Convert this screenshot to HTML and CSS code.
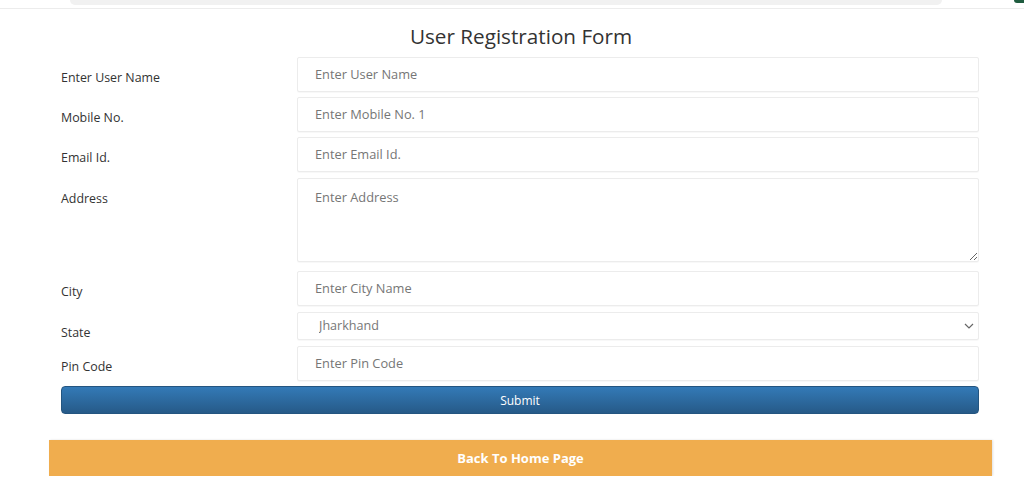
FILE: index.html
```html
<!DOCTYPE html>
<html lang="en">
<head>
<meta charset="utf-8">
<title>User Registration Form</title>
<link rel="stylesheet" href="styles.css">
</head>
<body>
<header class="topbar">
  <div class="search-strip"></div>
  <div class="corner-dot"></div>
</header>
<main class="page">
  <h2 class="title">User Registration Form</h2>
  <form class="reg-form">
    <div class="row">
      <label class="lbl">Enter User Name</label>
      <input class="field" type="text" placeholder="Enter User Name">
    </div>
    <div class="row gap5">
      <label class="lbl">Mobile No.</label>
      <input class="field" type="text" placeholder="Enter Mobile No. 1">
    </div>
    <div class="row gap5">
      <label class="lbl">Email Id.</label>
      <input class="field" type="text" placeholder="Enter Email Id.">
    </div>
    <div class="row gap6">
      <label class="lbl">Address</label>
      <textarea class="field area" placeholder="Enter Address"></textarea>
    </div>
    <div class="row gap9">
      <label class="lbl">City</label>
      <input class="field" type="text" placeholder="Enter City Name">
    </div>
    <div class="row row-short gap6">
      <label class="lbl">State</label>
      <div class="select-wrap">
        <select class="field select">
          <option>Jharkhand</option>
        </select>
        <svg class="chev" width="10" height="6" viewBox="0 0 10 6"><path d="M1 1l4 4 4-4" fill="none" stroke="#666" stroke-width="1.2"/></svg>
      </div>
    </div>
    <div class="row gap6">
      <label class="lbl">Pin Code</label>
      <input class="field" type="text" placeholder="Enter Pin Code">
    </div>
    <button class="submit" type="button">Submit</button>
  </form>
  <button class="back" type="button">Back To Home Page</button>
</main>
</body>
</html>
```

FILE: styles.css
```css
* { box-sizing: border-box; }

body {
  margin: 0;
  font-family: "Open Sans", "Liberation Sans", sans-serif;
  color: #333;
  background: #fff;
}

.topbar {
  height: 9px;
  border-bottom: 1px solid #ececec;
  display: flex;
  justify-content: space-between;
  align-items: flex-start;
}

.search-strip {
  margin-left: 70px;
  width: 872px;
  height: 5px;
  background: #f1f1f1;
  border-radius: 0 0 5px 5px;
}

.corner-dot {
  width: 10px;
  height: 3px;
  background: #1f5c3f;
  border-radius: 0 0 0 6px;
}

.page {
  width: 943px;
  margin-left: 49px;
}

.title {
  margin: 12px 0 5px;
  font-size: 20.7px;
  font-weight: 400;
  line-height: 31px;
  text-align: center;
  color: #333;
  padding-left: 1px;
}

.reg-form {
  padding: 0 13px 0 12px;
}

.row {
  display: flex;
  align-items: flex-start;
}

.row-short { height: 28px; }

.gap5 { margin-top: 5px; }
.gap6 { margin-top: 6px; }
.gap9 { margin-top: 9px; }

.lbl {
  width: 236px;
  flex: none;
  font-size: 12.4px;
  line-height: 18px;
  padding-top: 12px;
  color: #333;
}

.field {
  flex: 1;
  width: 100%;
  height: 35px;
  border: 1px solid #ececec;
  border-radius: 2px;
  background: #fff;
  padding: 0 17px 1px;
  font-family: "Open Sans", "Liberation Sans", sans-serif;
  font-size: 12.8px;
  color: #777;
  box-shadow: 0 1px 1px rgba(0,0,0,0.03);
  outline: none;
}

.field::placeholder { color: #767676; }

.area {
  height: 84px;
  padding-top: 8px;
  resize: vertical;
  line-height: 20px;
}

.select-wrap {
  flex: 1;
  position: relative;
  display: flex;
}

.select {
  height: 28px;
  appearance: none;
  -webkit-appearance: none;
  padding-left: 21px;
  font-size: 12.6px;
  color: #777;
}

.chev {
  position: absolute;
  right: 5px;
  top: 11px;
}

.submit {
  display: block;
  width: 100%;
  height: 28px;
  margin: 5px 0 0;
  border: 1px solid #245580;
  border-radius: 4px;
  background: linear-gradient(to bottom, #337ab7 0%, #265a88 100%);
  color: #fff;
  font-family: "Open Sans", "Liberation Sans", sans-serif;
  font-size: 12px;
  cursor: pointer;
}

.back {
  display: block;
  width: 100%;
  height: 36px;
  margin-top: 26px;
  border: none;
  background: #f0ad4e;
  color: #fff;
  font-family: "Open Sans", "Liberation Sans", sans-serif;
  font-size: 13px;
  font-weight: 700;
  box-shadow: 1px 0 2px rgba(0,0,0,0.12);
  cursor: pointer;
}
```
